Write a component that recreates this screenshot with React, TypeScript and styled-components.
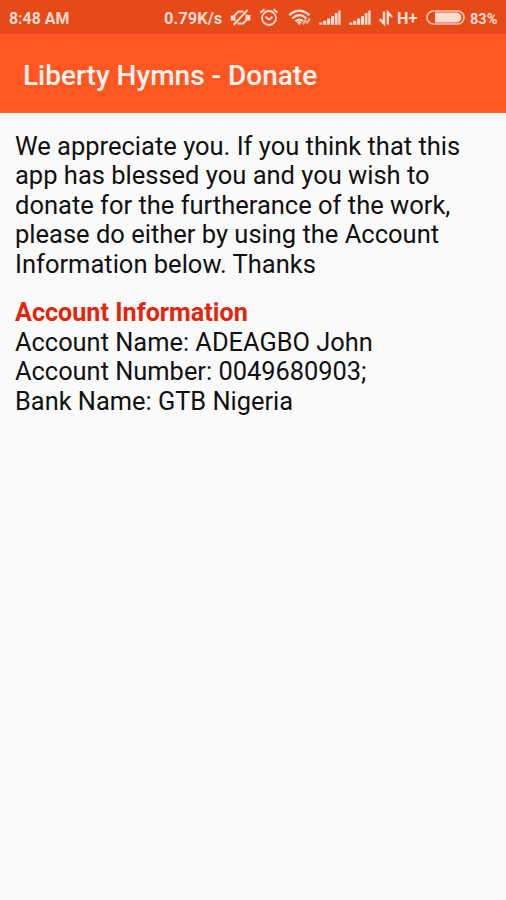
import React from "react";
import styled, { createGlobalStyle } from "styled-components";

const GlobalStyle = createGlobalStyle`
  body { margin: 0; background: #fafafa; }
  * { box-sizing: border-box; }
`;

const Screen = styled.div`
  min-height: 900px;
  background: #fafafa;
  font-family: Roboto, sans-serif;
  overflow: hidden;
`;

const StatusBar = styled.div`
  display: flex;
  align-items: center;
  justify-content: space-between;
  height: 34px;
  padding: 2px 8px 0 9px;
  background: #e64a19;
  color: #ffdcd0;
`;

const StatusItems = styled.div`
  display: flex;
  align-items: center;
`;

const StatusText = styled.span<{ $size: number; $width: number; $gap?: number }>`
  width: ${(p) => p.$width}px;
  margin-left: ${(p) => p.$gap ?? 0}px;
  padding-top: 1px;
  font-size: ${(p) => p.$size}px;
  font-weight: 700;
  line-height: 20px;
  white-space: nowrap;
`;

const Icon = styled.svg<{ $gap: number }>`
  display: block;
  flex: none;
  margin-left: ${(p) => p.$gap}px;
`;

const TitleBar = styled.header`
  display: flex;
  align-items: center;
  height: 79px;
  padding: 6px 23px 0;
  background: #ff5722;
  border-bottom: 1px solid #f2602f;
`;

const Title = styled.h1`
  margin: 0;
  color: #fff4f0;
  font-size: 28px;
  font-weight: 500;
  line-height: 32px;
`;

const Content = styled.main`
  padding: 18.6px 15px;
  color: #111;
  font-size: 25.4px;
  line-height: 29.6px;
  white-space: nowrap;
`;

const Paragraph = styled.p`
  margin: 0 0 18.4px;
  font-size: 25.5px;
`;

const SectionTitle = styled.h2`
  margin: 0;
  color: #e3260b;
  font-size: 25.15px;
  font-weight: 700;
  line-height: 29.6px;
`;

const MutedIcon = () => (
  <Icon $gap={8} width="21" height="20" viewBox="0 0 21 20" fill="none" stroke="currentColor" strokeWidth="1.9">
    <path d="M13.5 3.5H8.5L4.5 7.5v5.5M7.5 15.5h5.5l3.5-3.5V6.5M3.5 17 17.5 2" />
    <path d="M2.2 7.5v5M18.8 7v5.5" strokeWidth="3" />
  </Icon>
);

const AlarmIcon = () => (
  <Icon $gap={8} width="20" height="20" viewBox="0 0 20 20" fill="none" stroke="currentColor" strokeWidth="1.8">
    <circle cx="10" cy="10" r="7" />
    <path d="M1.5 4.5 5.5 1.2M18.5 4.5l-4-3.3M6.5 8.8l3.5 2.8 3.5-2.8" />
  </Icon>
);

const WifiIcon = () => (
  <Icon $gap={9} width="24" height="20" viewBox="0 0 24 20" fill="none" stroke="currentColor" strokeWidth="2.3">
    <path d="M1.2 7.2Q11 -1.6 21.5 7.2M4.3 10.3Q11.3 4 18.4 10.3M7.5 13.3Q11.3 10 15 13" />
    <path d="m8.8 14.3 2.5-1.2 2.4 1.2-2.4 3z" fill="currentColor" stroke="none" />
    <path d="m15 16.5 3-5M18.5 15.5l3.5-5" strokeWidth="2.4" opacity=".65" />
  </Icon>
);

const SignalIcon = ({ gap }: { gap: number }) => (
  <Icon $gap={gap} width="22" height="20" viewBox="0 0 22 20" fill="currentColor">
    <path d="M.3 14.5h3v2.3h-3zM4.2 12.8h3.1v4H4.2zM8.1 10.5h3.1v6.3H8.1zM12 8h3v8.8h-3zM15.8 5h2.7v11.8h-2.7zM19.2 2.5h2.4v14.3h-2.4z" />
  </Icon>
);

const DataIcon = () => (
  <Icon $gap={8} width="14" height="20" viewBox="0 0 14 20" fill="none" stroke="currentColor" strokeWidth="2.4">
    <path d="M5 3.5v12L.8 11M8.8 16.5v-12L13 9" />
  </Icon>
);

const BatteryIcon = () => (
  <Icon $gap={8} width="39" height="20" viewBox="0 0 39 20">
    <rect x="1" y="3" width="37" height="13" rx="6.5" fill="none" stroke="currentColor" strokeWidth="1.6" opacity=".85" />
    <path d="M9 4.6h21.5a4.9 4.9 0 0 1 0 9.8H9z" fill="currentColor" />
  </Icon>
);

export default function App() {
  return (
    <Screen>
      <GlobalStyle />
      <StatusBar>
        <StatusText $size={15.9} $width={62}>8:48 AM</StatusText>
        <StatusItems>
          <StatusText $size={16.5} $width={58}>0.79K/s</StatusText>
          <MutedIcon />
          <AlarmIcon />
          <WifiIcon />
          <SignalIcon gap={7} />
          <SignalIcon gap={8} />
          <DataIcon />
          <StatusText $size={16.2} $width={21} $gap={4}>H+</StatusText>
          <BatteryIcon />
          <StatusText $size={14.6} $width={28} $gap={5}>83%</StatusText>
        </StatusItems>
      </StatusBar>
      <TitleBar>
        <Title>Liberty Hymns - Donate</Title>
      </TitleBar>
      <Content>
        <Paragraph>
          We appreciate you. If you think that this<br />
          app has blessed you and you wish to<br />
          donate for the furtherance of the work,<br />
          please do either by using the Account<br />
          Information below. Thanks
        </Paragraph>
        <SectionTitle>Account Information</SectionTitle>
        <div>Account Name: ADEAGBO John</div>
        <div>Account Number: 0049680903;</div>
        <div>Bank Name: GTB Nigeria</div>
      </Content>
    </Screen>
  );
}
